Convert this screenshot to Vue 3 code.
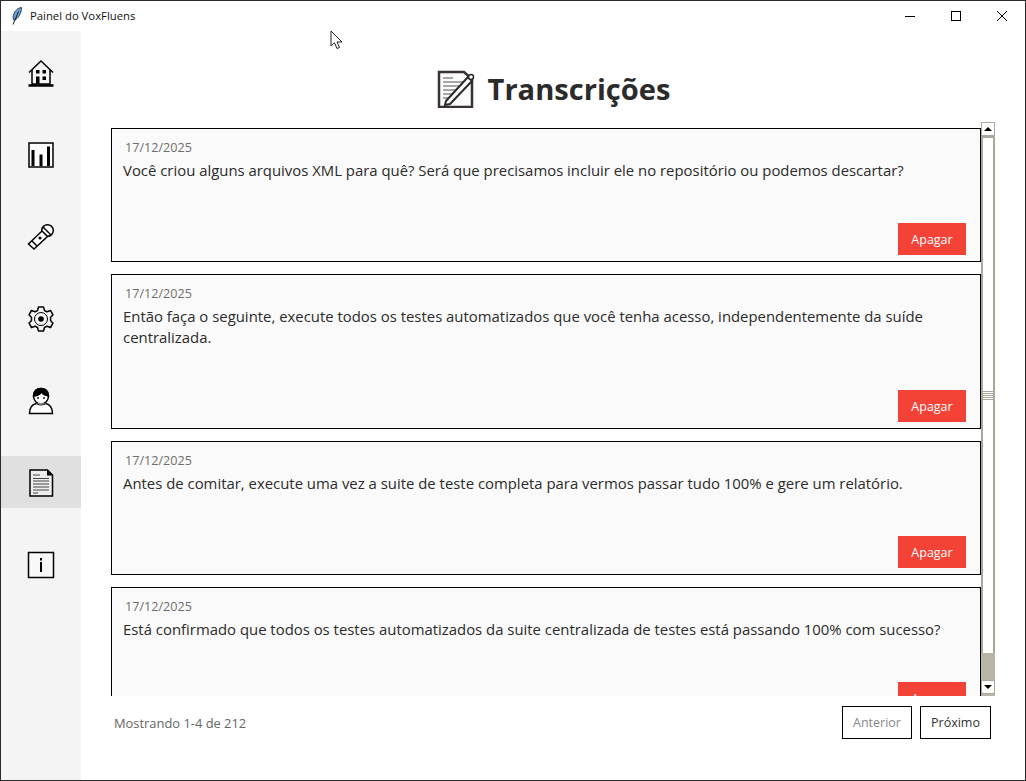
<template>
  <div class="window">
    <header class="titlebar">
      <svg class="feather" width="10" height="18" viewBox="0 0 10 18">
        <path d="M9.500 0.500C5 1 1.500 5 1 10.500L2 13.500C6.500 11.500 9.500 6 9.500 0.500Z" fill="#6d9fd6" stroke="#10202e" stroke-width="0.800" />
        <path d="M6.500 4.500L1 17.500" stroke="#10202e" stroke-width="1" fill="none" />
      </svg>
      <span class="title-text">Painel do VoxFluens</span>
      <div class="win-controls">
        <svg width="12" height="12" viewBox="0 0 12 12"><path d="M1 6.500H11" stroke="#000" /></svg>
        <svg width="12" height="12" viewBox="0 0 12 12"><rect x="1.500" y="1.500" width="9" height="9" fill="none" stroke="#000" /></svg>
        <svg width="12" height="12" viewBox="0 0 12 12"><path d="M1 1L11 11M11 1L1 11" stroke="#000" /></svg>
      </div>
    </header>

    <div class="body-row">
      <nav class="sidebar">
        <div class="nav-item">
          <svg width="28" height="28" viewBox="0 0 28 28" fill="none" stroke="#000" stroke-width="1.500">
            <path d="M2 13.500L14 2L26 13.500" />
            <path d="M5 11V25H23V11" />
            <path d="M1.500 26.500H26.500" stroke-width="2.500" />
            <rect x="9" y="11" width="3.500" height="3.500" fill="#000" stroke="none" />
            <rect x="15.500" y="11" width="3.500" height="3.500" fill="#000" stroke="none" />
            <rect x="9" y="17.500" width="3.500" height="8" fill="#000" stroke="none" />
            <rect x="15.500" y="17.500" width="3.500" height="3.500" fill="#000" stroke="none" />
          </svg>
        </div>
        <div class="nav-item">
          <svg width="28" height="28" viewBox="0 0 28 28" fill="none">
            <rect x="2" y="2" width="24" height="24" stroke="#000" stroke-width="1.500" fill="#fff" />
            <rect x="4.500" y="9" width="3" height="16" fill="#000" />
            <rect x="12.500" y="13.500" width="3" height="11.500" fill="#000" />
            <rect x="20" y="5.500" width="3" height="19.500" fill="#000" />
          </svg>
        </div>
        <div class="nav-item">
          <svg width="28" height="28" viewBox="0 0 28 28" fill="none" stroke="#000" stroke-width="1.500">
            <circle cx="20.500" cy="7.500" r="5.800" fill="#fff" />
            <path d="M16 4L24 12" />
            <path d="M15 8L20.500 13.500L7 26L1.500 21Z" fill="#fff" />
            <path d="M4.800 17.800L10 23" />
            <circle cx="13" cy="15" r="0.800" fill="#000" />
          </svg>
        </div>
        <div class="nav-item">
          <svg width="28" height="28" viewBox="0 0 28 28" fill="none" stroke="#000" stroke-width="1.500">
            <path d="M11.500 2H16.500L17.500 5.500L20 6.800L23.500 5.500L26 9.800L23.500 12.500V15.500L26 18.200L23.500 22.500L20 21.200L17.500 22.500L16.500 26H11.500L10.500 22.500L8 21.200L4.500 22.500L2 18.200L4.500 15.500V12.500L2 9.800L4.500 5.500L8 6.800L10.500 5.500Z" stroke-linejoin="round" />
            <circle cx="14" cy="14" r="6.500" stroke-width="1" />
            <circle cx="14" cy="14" r="2.800" fill="#000" stroke="none" />
          </svg>
        </div>
        <div class="nav-item">
          <svg width="28" height="28" viewBox="0 0 28 28" fill="none" stroke="#000" stroke-width="1.500">
            <path d="M6.500 9C6.500 4 10 1.500 14 1.500C18 1.500 21.500 4 21.500 9C21.500 13.500 18 17 14 17C10 17 6.500 13.500 6.500 9Z" fill="#fff" />
            <path d="M6.500 9C10 9 13 7 14.500 5C15.500 7 18 8.500 21.500 9C21.500 4 18 1.500 14 1.500C10 1.500 6.500 4 6.500 9Z" fill="#000" />
            <path d="M9.500 16.500C5 17.500 2.500 21 2.500 26.500H25.500C25.500 21 23 17.500 18.500 16.500" fill="#fff" />
            <path d="M9.500 16.500C11 18.500 17 18.500 18.500 16.500" stroke-width="1.200" />
            <circle cx="11" cy="11" r="0.900" fill="#000" stroke="none" />
            <circle cx="17" cy="11" r="0.900" fill="#000" stroke="none" />
          </svg>
        </div>
        <div class="nav-item active">
          <svg width="28" height="28" viewBox="0 0 28 28" fill="none">
            <path d="M3 1H20.500L25.500 6V27H3Z" fill="#eee" stroke="#000" stroke-width="1.500" />
            <path d="M20 1V6.500H25.500Z" fill="#000" />
            <path d="M6 6H13M6 9.500H22M6 12H22M6 15H22M6 18H22M6 21H22M6 24H11" stroke="#444" stroke-width="1.200" />
          </svg>
        </div>
        <div class="nav-item">
          <svg width="28" height="28" viewBox="0 0 28 28" fill="none">
            <rect x="1.500" y="1.500" width="25" height="25" stroke="#000" stroke-width="1.500" fill="#f8f8f8" />
            <rect x="13" y="7" width="2" height="2.500" fill="#000" />
            <rect x="13" y="11" width="2" height="10" fill="#000" />
          </svg>
        </div>
      </nav>

      <main class="content">
        <div class="page-head">
          <svg width="38" height="38" viewBox="0 0 38 38" fill="none">
            <path d="M2 2H27L35 9V37H2Z" fill="#fafafa" stroke="#3a3232" stroke-width="2.500" />
            <path d="M6 8H16M6 12H26M6 16H24M6 20H20M6 24H15M6 28H11" stroke="#8a8a8a" stroke-width="1.500" />
            <path d="M9 31L31 7L35 11L13 34L8 35Z" fill="#fff" stroke="#2a2a2a" stroke-width="2" />
            <circle cx="34" cy="7" r="2.500" fill="#fff" stroke="#2a2a2a" stroke-width="1.500" />
          </svg>
          <h1>Transcrições</h1>
        </div>

        <div class="list-row">
          <div class="list">
            <article v-for="item in items" :key="item.id" class="card">
              <div class="card-date">{{ item.date }}</div>
              <p class="card-text">{{ item.text }}</p>
              <button class="btn-delete">Apagar</button>
            </article>
          </div>
          <div class="scrollbar">
            <div class="sb-arrow"><span class="tri-up"></span></div>
            <div class="sb-thumb">
              <span class="grip"></span>
            </div>
            <div class="sb-track"></div>
            <div class="sb-arrow"><span class="tri-down"></span></div>
          </div>
        </div>

        <footer class="pager">
          <span class="pager-info">Mostrando 1-4 de 212</span>
          <div class="pager-btns">
            <button class="btn-page disabled">Anterior</button>
            <button class="btn-page next">Próximo</button>
          </div>
        </footer>
      </main>
    </div>

    <svg class="cursor" width="14" height="21" viewBox="0 0 14 21">
      <path d="M1 1V16L4.500 12.800L7 18.500L9.500 17.500L7 12H12Z" fill="#fff" stroke="#222" stroke-width="1" />
    </svg>
  </div>
</template>

<script setup>
const items = [
  { id: 1, date: '17/12/2025', text: 'Você criou alguns arquivos XML para quê? Será que precisamos incluir ele no repositório ou podemos descartar?' },
  { id: 2, date: '17/12/2025', text: 'Então faça o seguinte, execute todos os testes automatizados que você tenha acesso, independentemente da suíde centralizada.' },
  { id: 3, date: '17/12/2025', text: 'Antes de comitar, execute uma vez a suite de teste completa para vermos passar tudo 100% e gere um relatório.' },
  { id: 4, date: '17/12/2025', text: 'Está confirmado que todos os testes automatizados da suite centralizada de testes está passando 100% com sucesso?' }
];
</script>

<style>
html, body {
  margin: 0;
  overflow: hidden;
  background: #fff;
}
</style>

<style scoped>
.window {
  position: relative;
  width: 1026px;
  height: 781px;
  box-sizing: border-box;
  border: 1px solid #2b2b2b;
  background: #fff;
  display: flex;
  flex-direction: column;
  font-family: 'Open Sans', 'Noto Sans', sans-serif;
  color: #222;
  overflow: hidden;
}

.titlebar {
  height: 30px;
  flex: none;
  display: flex;
  align-items: center;
  padding-left: 11px;
}

.title-text {
  margin-left: 8px;
  margin-top: -1px;
  font-size: 11.300px;
  color: #111;
}

.win-controls {
  margin-left: auto;
  display: flex;
  gap: 34px;
  padding-right: 17px;
}

.body-row {
  flex: 1;
  display: flex;
  min-height: 0;
}

.sidebar {
  width: 80px;
  flex: none;
  background: #f4f4f4;
  padding-top: 15px;
  display: flex;
  flex-direction: column;
  gap: 30px;
}

.nav-item {
  height: 52px;
  box-sizing: border-box;
  padding-top: 2px;
  display: flex;
  align-items: center;
  justify-content: center;
}

.nav-item.active {
  background: #e0e0e0;
}

.content {
  flex: 1;
  min-width: 0;
  display: flex;
  flex-direction: column;
  padding: 0 30px;
}

.page-head {
  height: 91px;
  flex: none;
  display: flex;
  align-items: center;
  justify-content: center;
  gap: 13px;
  padding: 25px 0 0 1px;
  box-sizing: border-box;
}

.page-head h1 {
  margin: 0;
  font-size: 29.100px;
  font-weight: 700;
  color: #2b2b2b;
}

.list-row {
  height: 574px;
  flex: none;
  display: flex;
}

.list {
  flex: 1;
  min-width: 0;
  padding-top: 6px;
  overflow: hidden;
  display: flex;
  flex-direction: column;
  gap: 12px;
}

.card {
  flex: none;
  border: 1px solid #000;
  background: #fafafa;
  padding: 10px 14px 6px 11px;
  display: flex;
  flex-direction: column;
}

.card-date {
  height: 18px;
  line-height: 18px;
  font-size: 12.600px;
  padding-left: 2px;
  color: #6e6e6e;
}

.card-text {
  margin: 3px 0 42px;
  font-size: 14.900px;
  line-height: 21px;
  color: #2b2b2b;
}

.btn-delete {
  align-self: flex-end;
  width: 68px;
  height: 32px;
  border: none;
  background: #f44336;
  color: #fff;
  font-family: inherit;
  font-size: 12.500px;
  padding: 0;
}

.scrollbar {
  width: 14px;
  flex: none;
  display: flex;
  flex-direction: column;
  box-sizing: border-box;
  padding-bottom: 2px;
  background: #b8b5a8;
}

.sb-arrow {
  height: 14px;
  flex: none;
  box-sizing: border-box;
  border: 1px solid #aaa89d;
  background: #fff;
  display: flex;
  align-items: center;
  justify-content: center;
}

.tri-up,
.tri-down {
  width: 0;
  height: 0;
  border-left: 4px solid transparent;
  border-right: 4px solid transparent;
}

.tri-up {
  border-bottom: 4px solid #000;
}

.tri-down {
  border-top: 4px solid #000;
}

.sb-thumb {
  height: 517px;
  flex: none;
  box-sizing: border-box;
  border-left: 2px solid #aaa89d;
  border-right: 2px solid #aaa89d;
  border-top: 2px solid #aaa89d;
  background: #fff;
  display: flex;
  align-items: center;
  justify-content: center;
}

.grip {
  width: 10px;
  height: 9px;
  background: repeating-linear-gradient(#aaa89d 0 1px, #fff 1px 2px);
}

.sb-track {
  flex: 1;
}

.pager {
  flex: 1;
  display: flex;
  justify-content: space-between;
  align-items: flex-start;
  padding: 10px 4px 0 3px;
}

.pager-info {
  font-size: 12.900px;
  line-height: 34px;
  color: #666;
}

.pager-btns {
  display: flex;
  gap: 8px;
}

.btn-page {
  width: 70px;
  height: 33px;
  border: 1px solid #000;
  background: #fff;
  color: #333;
  font-family: inherit;
  font-size: 12.500px;
  padding: 0;
}

.btn-page.next {
  width: 71px;
}

.btn-page.disabled {
  color: #888;
}

.cursor {
  position: absolute;
  left: 329px;
  top: 29px;
}
</style>
